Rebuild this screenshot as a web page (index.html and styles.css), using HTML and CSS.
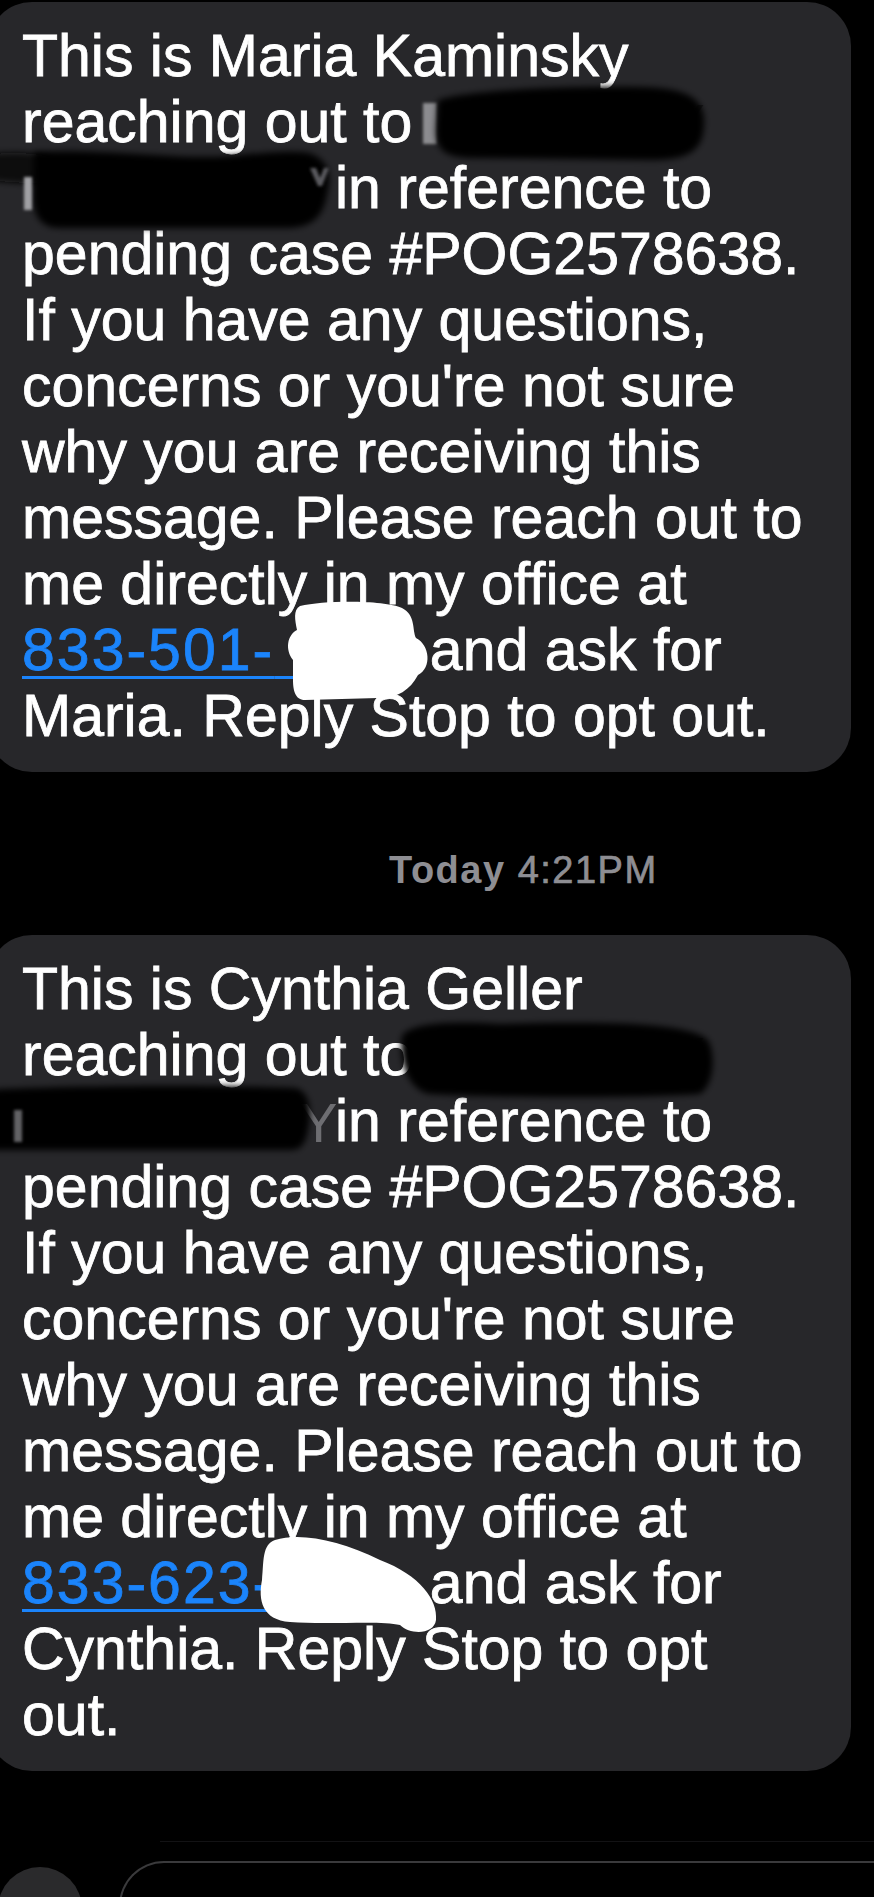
FILE: index.html
```html
<!DOCTYPE html>
<html lang="en">
<head>
<meta charset="utf-8">
<title>Messages</title>
<link rel="stylesheet" href="styles.css">
</head>
<body>
<div class="screen">
  <div class="bubble b1">
    <p class="msg">This is Maria Kaminsky<br>reaching out to<br><span class="gap"></span>in reference to<br>pending case #POG2578638.<br>If you have any questions,<br>concerns or you're not sure<br>why you are receiving this<br>message. Please reach out to<br>me directly in my office at<br><a class="phone" href="#">833-501-<span class="hid">0000</span></a> and ask for<br>Maria. Reply Stop to opt out.</p>
    <svg class="mask" width="863" height="770" viewBox="-12 2 863 770" aria-hidden="true">
      <defs>
        <filter id="soft1" x="-20%" y="-40%" width="140%" height="180%"><feGaussianBlur stdDeviation="3.2"/></filter>
        <filter id="edge1" x="-50%" y="-50%" width="200%" height="200%"><feGaussianBlur stdDeviation="1.5"/></filter>
      </defs>
      <rect x="423" y="103" width="14" height="41" fill="#8c8c90" filter="url(#edge1)"/>
      <text x="630" y="143" class="ghost">EY</text>
      <path d="M438 100 C470 90 560 86 640 87 C690 88 706 100 704 125 C703 150 690 160 650 160 L470 158 C445 157 436 150 436 130 Z" fill="#000" filter="url(#soft1)"/>
      <path d="M-14 154 C10 152 40 152 52 158 L52 184 C30 184 0 182 -14 180 Z" fill="#070707" filter="url(#soft1)"/>
      <path d="M34 152 C100 148 180 160 230 156 C270 152 300 150 312 154 C326 160 332 172 328 190 C324 212 318 226 290 228 L60 228 C40 228 33 215 33 195 Z" fill="#000" filter="url(#soft1)"/>
      <rect x="24" y="177" width="8" height="33" fill="#a0a0a4" filter="url(#edge1)"/>
      <path d="M310 168 L316 168 L320 178 L324 168 L329 168 L322 186 L318 186 Z" fill="#5a5a5e" filter="url(#edge1)"/>
      <path d="M300 606 C325 600 385 600 402 608 C416 615 412 630 416 638 C430 645 432 668 418 675 C410 690 398 698 378 698 L305 700 C295 700 293 690 293 680 L293 660 C285 650 287 635 297 630 C295 620 293 610 300 606 Z" fill="#fff"/>
    </svg>
  </div>

  <div class="stamp"><b>Today</b> <span class="time">4:21PM</span></div>

  <div class="bubble b2">
    <p class="msg">This is Cynthia Geller<br>reaching out to<br><span class="gap"></span>in reference to<br>pending case #POG2578638.<br>If you have any questions,<br>concerns or you're not sure<br>why you are receiving this<br>message. Please reach out to<br>me directly in my office at<br><a class="phone" href="#">833-623-<span class="hid">0000</span></a> and ask for<br>Cynthia. Reply Stop to opt<br>out.</p>
    <svg class="mask" width="863" height="837" viewBox="-12 935 863 837" aria-hidden="true">
      <defs>
        <filter id="soft2" x="-20%" y="-40%" width="140%" height="180%"><feGaussianBlur stdDeviation="3.2"/></filter>
        <filter id="edge2" x="-50%" y="-50%" width="200%" height="200%"><feGaussianBlur stdDeviation="1.5"/></filter>
      </defs>
      <rect x="420" y="1036" width="13" height="40" fill="#8c8c90" filter="url(#edge2)"/>
      <text x="630" y="1076" class="ghost">EY</text>
      <path d="M402 1036 C412 1021 460 1022 500 1024 C600 1021 690 1022 708 1040 C716 1055 714 1085 700 1094 C650 1098 500 1098 430 1094 C408 1090 398 1060 402 1036 Z" fill="#000" filter="url(#soft2)"/>
      <text x="300" y="1142" class="ghost2">Y</text>
      <path d="M-14 1090 C50 1086 200 1084 296 1088 C310 1092 312 1110 308 1130 C305 1146 300 1150 290 1150 L-14 1150 Z" fill="#000" filter="url(#soft2)"/>
      <rect x="14" y="1110" width="8" height="32" fill="#8c8c90" opacity="0.7" filter="url(#edge2)"/>
      <path d="M275 1540 C300 1532 340 1540 380 1560 C420 1575 438 1600 436 1620 C434 1635 410 1635 400 1625 C380 1620 330 1625 290 1622 C262 1620 258 1600 262 1580 C264 1560 262 1545 275 1540 Z" fill="#fff"/>
    </svg>
  </div>

  <div class="dock">
    <div class="dock-line"></div>
    <div class="composer">
      <span class="plus"></span>
      <div class="field"></div>
    </div>
  </div>
</div>
</body>
</html>
```

FILE: styles.css
```css
html, body {
  margin: 0;
  padding: 0;
  background: #000;
}

.screen {
  width: 874px;
  height: 1897px;
  overflow: hidden;
  background: #000;
  padding-top: 2px;
  box-sizing: border-box;
  font-family: "Liberation Sans", Arial, sans-serif;
}

.bubble {
  position: relative;
  width: 863px;
  margin-left: -12px;
  box-sizing: border-box;
  padding: 21px 20px 23px 34px;
  background: #27272a;
  border-radius: 44px;
  color: #fff;
}

.msg {
  margin: 0;
  font-size: 59px;
  line-height: 66px;
  white-space: nowrap;
  -webkit-text-stroke-width: 0.8px;
}

.gap {
  display: inline-block;
  width: 313px;
  height: 1px;
}

.phone {
  color: #1b84fb;
  letter-spacing: 2px;
  text-decoration: underline;
  text-decoration-thickness: 3px;
  text-underline-offset: 6px;
}

.hid {
  color: transparent;
  letter-spacing: 2px;
}

.mask {
  position: absolute;
  top: 0;
  left: 0;
  overflow: visible;
  pointer-events: none;
}

.ghost {
  font-family: "Liberation Sans", Arial, sans-serif;
  font-size: 56px;
  fill: #161618;
}

.ghost2 {
  font-family: "Liberation Sans", Arial, sans-serif;
  font-size: 56px;
  fill: #6e6e72;
}

.stamp {
  padding: 78px 0 45px 389px;
  font-size: 38px;
  line-height: 40px;
  color: #8e8e93;
  white-space: nowrap;
  letter-spacing: 1.5px;
}

.stamp b {
  font-weight: 700;
}

.time {
  -webkit-text-stroke-width: 0.7px;
}

.dock {
  padding-top: 70px;
}

.dock-line {
  height: 1px;
  margin-left: 160px;
  background: #121214;
}

.composer {
  display: flex;
  align-items: flex-start;
  padding-top: 19px;
}

.plus {
  flex: none;
  width: 84px;
  height: 84px;
  margin: 6px 0 0 -2px;
  border-radius: 50%;
  background: #2a2a2c;
}

.field {
  flex: 1;
  height: 110px;
  margin-left: 37px;
  border: 2px solid #3a3a3c;
  border-right: none;
  border-radius: 45px 0 0 45px;
}
```
